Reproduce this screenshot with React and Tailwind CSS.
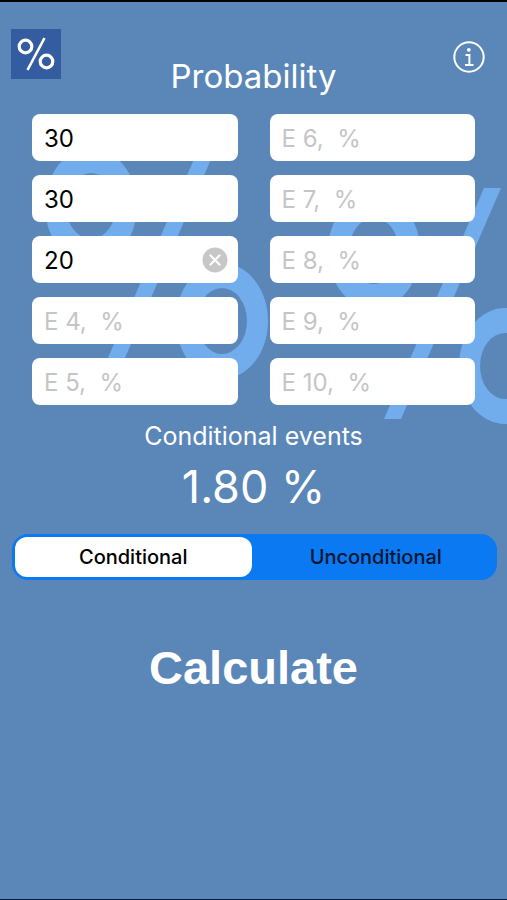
import React, { useState } from 'react';

const FIELD_COUNT = 10;

const calculate = (values, mode) => {
  const events = values.filter((v) => v !== '').map((v) => Number(v) / 100);
  if (events.length === 0) return 0;
  if (mode === 'conditional') return events.reduce((acc, p) => acc * p, 1) * 100;
  return (1 - events.reduce((acc, p) => acc * (1 - p), 1)) * 100;
};

const Backdrop = () => (
  <svg
    viewBox="0 2 507 450"
    className="absolute left-0 top-0 w-full h-auto pointer-events-none"
    aria-hidden="true"
  >
    <defs>
      <g id="percent-mark">
        <path
          fillRule="evenodd"
          d="M45 206a46 58 0 1 0 92 0a46 58 0 1 0 -92 0ZM66 206a25 33 0 1 0 50 0a25 33 0 1 0 -50 0Z"
        />
        <path
          fillRule="evenodd"
          d="M176 321a46 58 0 1 0 92 0a46 58 0 1 0 -92 0ZM197 321a25 33 0 1 0 50 0a25 33 0 1 0 -50 0Z"
        />
        <path d="M201 143H218L118 374H101Z" />
      </g>
    </defs>
    <g fill="#71adec">
      <use href="#percent-mark" />
      <use href="#percent-mark" x="283" y="45" />
    </g>
  </svg>
);

const Logo = () => (
  <svg viewBox="0 0 50 50" className="w-[50px] h-[50px] bg-[#345ca1]" role="img" aria-label="Percent">
    <g fill="none" stroke="#fff">
      <circle cx="14.5" cy="17.5" r="6.3" strokeWidth="3.2" />
      <circle cx="35.5" cy="32.5" r="6.3" strokeWidth="3.2" />
      <path d="M33.5 9L16.5 41" strokeWidth="2.6" />
    </g>
  </svg>
);

const InfoIcon = () => (
  <svg viewBox="0 0 32 32" className="w-8 h-8" fill="none" stroke="#fff" aria-hidden="true">
    <circle cx="16" cy="16" r="14.7" strokeWidth="2" />
    <circle cx="15.8" cy="8.8" r="1.9" fill="#fff" stroke="none" />
    <path d="M12.5 14H16.4V23.8M12 24H20.5" strokeWidth="2" />
  </svg>
);

const ClearIcon = () => (
  <svg viewBox="0 0 26 26" className="w-[26px] h-[26px]" aria-hidden="true">
    <circle cx="13" cy="13" r="12.5" fill="#c7c7c7" />
    <path d="M8.5 8.5L17.5 17.5M17.5 8.5L8.5 17.5" stroke="#fff" strokeWidth="2.2" strokeLinecap="round" />
  </svg>
);

const EventField = ({ index, value, active, onChange, onFocus }) => (
  <div className="relative">
    <input
      type="text"
      inputMode="decimal"
      aria-label={`Event ${index + 1}, percent`}
      placeholder={`E ${index + 1},  %`}
      value={value}
      onChange={(e) => onChange(index, e.target.value)}
      onFocus={() => onFocus(index)}
      className="block w-full h-[47px] pt-[2px] pl-3 pr-10 rounded-lg bg-white text-2xl text-black placeholder:text-[#c5c5c7] outline-none"
    />
    {active && value !== '' && (
      <button
        type="button"
        aria-label="Clear"
        onClick={() => onChange(index, '')}
        className="absolute inset-y-0 right-[10px] flex items-center"
      >
        <ClearIcon />
      </button>
    )}
  </div>
);

const Segment = ({ label, selected, onSelect }) => (
  <button
    type="button"
    aria-pressed={selected}
    onClick={onSelect}
    className={
      selected
        ? 'flex-1 rounded-xl bg-white text-xl font-medium text-black'
        : 'flex-1 rounded-xl text-xl font-medium text-[#03152e]'
    }
  >
    {label}
  </button>
);

const App = () => {
  const [values, setValues] = useState(['30', '30', '20', ...Array(FIELD_COUNT - 3).fill('')]);
  const [activeField, setActiveField] = useState(2);
  const [mode, setMode] = useState('conditional');
  const [result, setResult] = useState('1.80');

  const handleChange = (index, value) => {
    setValues(values.map((v, i) => (i === index ? value : v)));
  };

  return (
    <div className="relative flex flex-col min-h-screen bg-[#5a87b8] border-t-2 border-t-black border-b border-b-[#0c1c3c] font-['Inter','Liberation_Sans',sans-serif]">
      <Backdrop />

      <header className="relative grid grid-cols-[1fr_auto_1fr] items-start pt-[27px] px-[11px]">
        <Logo />
        <h1 className="pt-[27px] text-[33px] leading-10 text-white">Probability</h1>
        <button type="button" aria-label="Info" className="justify-self-end mt-3 mr-[11px]">
          <InfoIcon />
        </button>
      </header>

      <main className="relative">
        <div className="grid grid-flow-col grid-cols-2 grid-rows-5 gap-x-8 gap-y-[14px] px-8 pt-[18px]">
          {values.map((value, i) => (
            <EventField
              key={i}
              index={i}
              value={value}
              active={i === activeField}
              onChange={handleChange}
              onFocus={setActiveField}
            />
          ))}
        </div>

        <div className="pt-[13px] text-center text-white">
          <p className="text-[25px] leading-9">
            {mode === 'conditional' ? 'Conditional events' : 'Unconditional events'}
          </p>
          <p className="pt-[5px] text-[45px] leading-[56px]">{result} %</p>
        </div>

        <div className="flex gap-[6px] h-[46px] mt-[19px] ml-3 mr-[10px] p-[3px] rounded-2xl bg-[#0b79f1]">
          <Segment
            label="Conditional"
            selected={mode === 'conditional'}
            onSelect={() => setMode('conditional')}
          />
          <Segment
            label="Unconditional"
            selected={mode === 'unconditional'}
            onSelect={() => setMode('unconditional')}
          />
        </div>

        <div className="flex justify-center pt-[60px]">
          <button
            type="button"
            onClick={() => setResult(calculate(values, mode).toFixed(2))}
            className="font-['Liberation_Sans',Arial,sans-serif] text-[47px] leading-14 font-bold text-white"
          >
            Calculate
          </button>
        </div>
      </main>
    </div>
  );
};

export default App;
